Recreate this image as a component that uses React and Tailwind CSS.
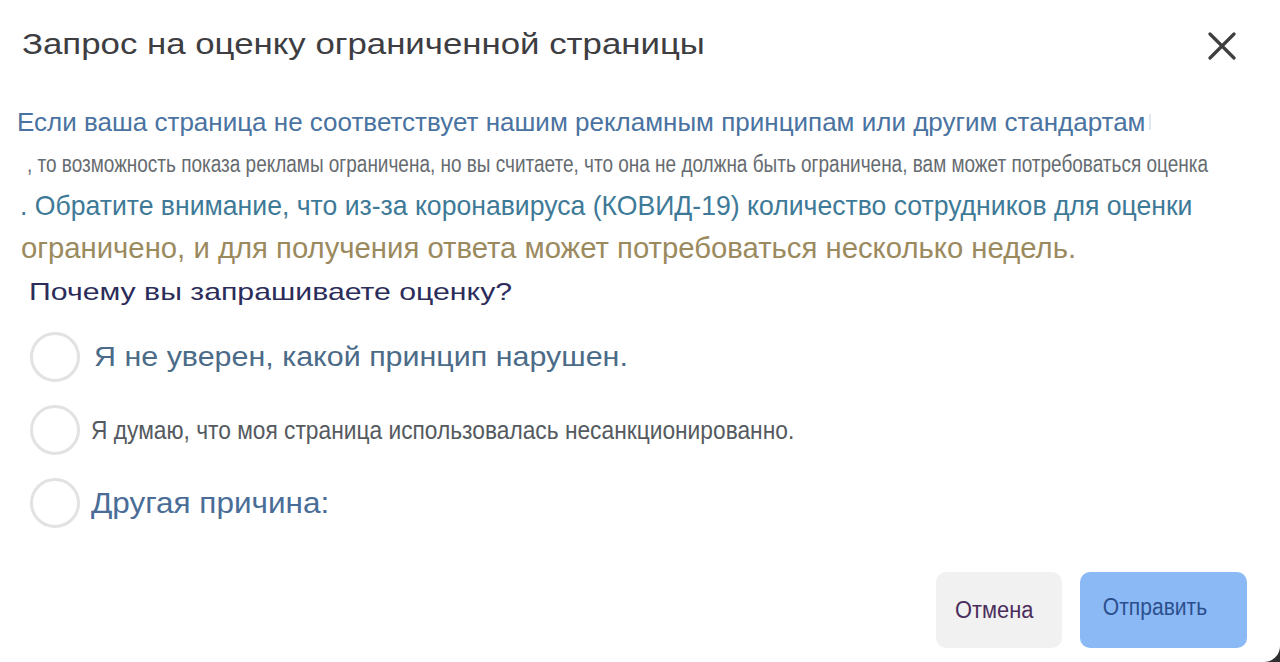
const options = [
  {
    label: "Я не уверен, какой принцип нарушен.",
    cls: "text-[28px] text-[#4b6b88] ml-[14px] scale-x-[1.087]",
  },
  {
    label: "Я думаю, что моя страница использовалась несанкционированно.",
    cls: "text-[25px] text-[#555a60] ml-[11px] scale-x-[0.91]",
  },
  {
    label: "Другая причина:",
    cls: "text-[30px] text-[#4a6d98] ml-[11px] scale-x-[1.05]",
  },
];

export default function App() {
  return (
    <div className="w-[1280px] h-[662px] bg-[#2f2f2f] font-['Liberation_Sans',Arial,sans-serif]">
      <div className="w-full h-full bg-white rounded-br-[16px] flex flex-col overflow-hidden">
        {/* Header */}
        <div className="flex justify-between items-start pl-[22px] pr-[44px] pt-[26px] h-[84px]">
          <h2 className="text-[29px] leading-[36px] text-[#3d3d42] whitespace-nowrap scale-x-[1.2] origin-left">
            Запрос на оценку ограниченной страницы
          </h2>
          <svg width="28" height="28" viewBox="0 0 28 28" className="mt-[6px]">
            <path d="M2 2 L26 26 M26 2 L2 26" stroke="#3f3f3f" strokeWidth="3.2" strokeLinecap="round" />
          </svg>
        </div>

        {/* Body text */}
        <div className="flex flex-col whitespace-nowrap">
          <p className="mt-[23px] ml-[17px] text-[26px] leading-[30px] text-[#4a73a1] flex items-center">
            Если ваша страница не соответствует нашим рекламным принципам или другим стандартам
            <span className="ml-[3px] w-[2px] h-[16px] bg-[#dfe8f3]" />
          </p>
          <p className="mt-[15px] ml-[27px] text-[23px] leading-[24px] text-[#666b70] scale-x-[0.825] origin-left">
            , то возможность показа рекламы ограничена, но вы считаете, что она не должна быть ограничена, вам может потребоваться оценка
          </p>
          <p className="mt-[13px] ml-[20px] text-[28px] leading-[34px] text-[#3e7a97] scale-x-[0.95] origin-left">
            . Обратите внимание, что из-за коронавируса (КОВИД-19) количество сотрудников для оценки
          </p>
          <p className="mt-[10px] ml-[21px] text-[29px] leading-[30px] text-[#9b8a5e] scale-x-[1.01] origin-left">
            ограничено, и для получения ответа может потребоваться несколько недель.
          </p>
          <p className="mt-[15px] ml-[29px] text-[24px] leading-[28px] text-[#2c2c5a] scale-x-[1.26] origin-left">
            Почему вы запрашиваете оценку?
          </p>
        </div>

        {/* Radio options */}
        <div className="flex flex-col gap-[23px] mt-[26px] ml-[30px]">
          {options.map((o) => (
            <label key={o.label} className="flex items-center h-[50px] whitespace-nowrap">
              <span className="w-[50px] h-[50px] rounded-full border-[3px] border-[#e2e2e2] bg-white shrink-0" />
              <span className={`block leading-[32px] origin-left ${o.cls}`}>{o.label}</span>
            </label>
          ))}
        </div>

        {/* Footer */}
        <div className="flex justify-end gap-[18px] mt-auto mb-[14px] mr-[33px]">
          <button className="w-[126px] h-[76px] rounded-[10px] bg-[#f1f1f1] text-[23px] text-[#4b2d5c] pr-[10px]">
            <span className="inline-block scale-x-[0.95]">Отмена</span>
          </button>
          <button className="w-[167px] h-[76px] rounded-[10px] bg-[#8bb9f6] text-[23px] text-[#2b4f8d] pb-[6px] pr-[17px]">
            <span className="inline-block scale-x-[0.915]">Отправить</span>
          </button>
        </div>
      </div>
    </div>
  );
}
